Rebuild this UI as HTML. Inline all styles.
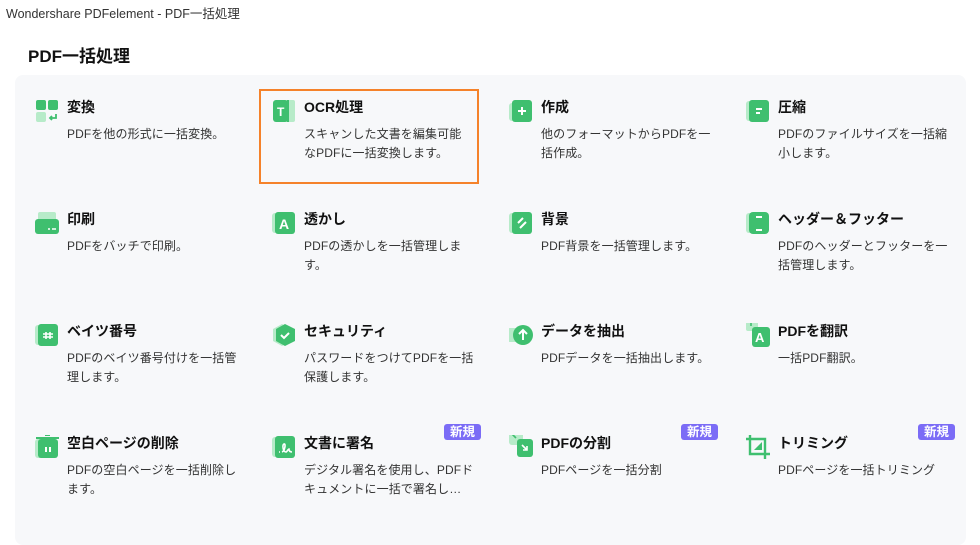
<!DOCTYPE html>
<html><head><meta charset="utf-8"><style>
*{margin:0;padding:0;box-sizing:border-box}
body{width:980px;height:537px;background:#fff;font-family:"Liberation Sans","Noto Sans CJK JP",sans-serif;position:relative;overflow:hidden;color:#222}
.wt{position:absolute;left:6px;top:3px;font-size:12.5px;color:#333}
.h{position:absolute;left:28px;top:42px;font-size:17px;font-weight:bold;color:#111}
.panel{position:absolute;left:15px;top:75px;width:951px;height:470px;background:#f7f8fa;border-radius:8px}
.it{position:absolute;width:230px}
.ic{position:absolute;left:0;top:-2px;width:24px;height:24px}
.t{position:absolute;left:32px;top:-4px;font-size:14px;font-weight:bold;color:#111;white-space:nowrap}
.d{position:absolute;left:32px;top:24px;white-space:nowrap;font-size:12px;line-height:19px;color:#333;letter-spacing:0.1px}
.b{position:absolute;top:-13px;right:21px;background:#7b6cf6;color:#fff;font-size:12.5px;font-weight:bold;padding:0 6px;height:16px;line-height:16px;border-radius:3px}
.sel{position:absolute;left:259px;top:89px;width:220px;height:95px;border:2px solid #f5822a}
</style></head><body>
<div class="wt">Wondershare PDFelement - PDF一括処理</div>
<div class="h">PDF一括処理</div>
<div class="panel"></div>
<div class="sel"></div>

<!-- row1 -->
<div class="it" style="left:35px;top:101px">
<svg class="ic" viewBox="0 0 24 24"><rect x="1" y="1" width="10" height="10" rx="2" fill="#3fbf6f"/><rect x="13" y="1" width="10" height="10" rx="2" fill="#3fbf6f"/><rect x="1" y="13" width="10" height="10" rx="2" fill="#b7ebc9"/><path d="M21 15v4h-6m2-2l-2 2 2 2" stroke="#3fbf6f" stroke-width="1.8" fill="none"/></svg>
<div class="t">変換</div><div class="d">PDFを他の形式に一括変換。</div></div>
<div class="it" style="left:272px;top:101px">
<svg class="ic" viewBox="0 0 24 24"><rect x="10" y="1" width="13" height="22" rx="2" fill="#b7ebc9"/><rect x="1" y="1" width="15" height="22" rx="3" fill="#3fbf6f"/><rect x="15" y="1" width="2" height="22" fill="#3fbf6f"/><text x="5" y="17" font-size="12" font-weight="bold" fill="#fff" font-family="Liberation Sans">T</text></svg>
<div class="t">OCR処理</div><div class="d">スキャンした文書を編集可能<br>なPDFに一括変換します。</div></div>
<div class="it" style="left:509px;top:101px">
<svg class="ic" viewBox="0 0 24 24"><rect x="0" y="4" width="14" height="18" rx="3" fill="#b7ebc9"/><rect x="3" y="1" width="20" height="22" rx="3" fill="#3fbf6f"/><path d="M13 8v8M9 12h8" stroke="#fff" stroke-width="2"/></svg>
<div class="t">作成</div><div class="d">他のフォーマットからPDFを一<br>括作成。</div></div>
<div class="it" style="left:746px;top:101px">
<svg class="ic" viewBox="0 0 24 24"><rect x="0" y="2" width="12" height="20" rx="3" fill="#b7ebc9"/><rect x="3" y="1" width="20" height="22" rx="3" fill="#3fbf6f"/><path d="M10 10h6M10 14h4" stroke="#fff" stroke-width="2"/></svg>
<div class="t">圧縮</div><div class="d">PDFのファイルサイズを一括縮<br>小します。</div></div>

<!-- row2 -->
<div class="it" style="left:35px;top:213px">
<svg class="ic" viewBox="0 0 24 24"><rect x="3" y="1" width="18" height="10" rx="2" fill="#b7ebc9"/><rect x="0" y="8" width="24" height="15" rx="3" fill="#3fbf6f"/><path d="M13 18h2M17 18h4" stroke="#fff" stroke-width="1.6"/></svg>
<div class="t">印刷</div><div class="d">PDFをバッチで印刷。</div></div>
<div class="it" style="left:272px;top:213px">
<svg class="ic" viewBox="0 0 24 24"><rect x="0" y="2" width="12" height="20" rx="3" fill="#b7ebc9"/><rect x="3" y="1" width="20" height="22" rx="3" fill="#3fbf6f"/><text x="7" y="18" font-size="14" font-weight="bold" fill="#fff" font-family="Liberation Sans">A</text></svg>
<div class="t">透かし</div><div class="d">PDFの透かしを一括管理しま<br>す。</div></div>
<div class="it" style="left:509px;top:213px">
<svg class="ic" viewBox="0 0 24 24"><rect x="0" y="2" width="12" height="20" rx="3" fill="#b7ebc9"/><rect x="3" y="1" width="20" height="22" rx="3" fill="#3fbf6f"/><path d="M9 12l5-5M11 17l6-6" stroke="#fff" stroke-width="2"/></svg>
<div class="t">背景</div><div class="d">PDF背景を一括管理します。</div></div>
<div class="it" style="left:746px;top:213px">
<svg class="ic" viewBox="0 0 24 24"><rect x="0" y="2" width="12" height="20" rx="3" fill="#b7ebc9"/><rect x="3" y="1" width="20" height="22" rx="4" fill="#3fbf6f"/><path d="M10 6h6M10 19h6" stroke="#fff" stroke-width="2"/></svg>
<div class="t">ヘッダー＆フッター</div><div class="d">PDFのヘッダーとフッターを一<br>括管理します。</div></div>

<!-- row3 -->
<div class="it" style="left:35px;top:325px">
<svg class="ic" viewBox="0 0 24 24"><rect x="0" y="2" width="12" height="20" rx="3" fill="#b7ebc9"/><rect x="3" y="1" width="20" height="22" rx="3" fill="#3fbf6f"/><path d="M11 9v7M15 9v7M8 11h10M8 14h10" stroke="#fff" stroke-width="1.6"/></svg>
<div class="t">ベイツ番号</div><div class="d">PDFのベイツ番号付けを一括管<br>理します。</div></div>
<div class="it" style="left:272px;top:325px">
<svg class="ic" viewBox="0 0 24 24"><path d="M10 1l9 5v12l-9 5-9-5V6z" fill="#b7ebc9"/><path d="M13 1l10 5v12l-10 5-9-5V6z" fill="#3fbf6f"/><path d="M9 12l3 3 5-5" stroke="#fff" stroke-width="2" fill="none"/></svg>
<div class="t">セキュリティ</div><div class="d">パスワードをつけてPDFを一括<br>保護します。</div></div>
<div class="it" style="left:509px;top:325px">
<svg class="ic" viewBox="0 0 24 24"><rect x="-2" y="5" width="14" height="14" rx="3" fill="#b7ebc9"/><circle cx="14" cy="12" r="10" fill="#3fbf6f"/><path d="M14 17V8M10 11l4-4 4 4" stroke="#fff" stroke-width="2" fill="none"/></svg>
<div class="t">データを抽出</div><div class="d">PDFデータを一括抽出します。</div></div>
<div class="it" style="left:746px;top:325px">
<svg class="ic" viewBox="0 0 24 24"><rect x="0" y="-4" width="12" height="12" rx="2" fill="#b7ebc9"/><rect x="6" y="4" width="18" height="20" rx="3" fill="#3fbf6f"/><path d="M2 -1h6M5 -2v5" stroke="#3fbf6f" stroke-width="1.6"/><text x="9" y="19" font-size="13" font-weight="bold" fill="#fff" font-family="Liberation Sans">A</text></svg>
<div class="t">PDFを翻訳</div><div class="d">一括PDF翻訳。</div></div>

<!-- row4 -->
<div class="it" style="left:35px;top:437px">
<svg class="ic" viewBox="0 0 24 24"><rect x="0" y="4" width="12" height="19" rx="3" fill="#b7ebc9"/><rect x="3" y="4" width="20" height="19" rx="3" fill="#3fbf6f"/><path d="M1 3h23M10 0h5" stroke="#3fbf6f" stroke-width="2"/><path d="M11 12v5M15 12v5" stroke="#fff" stroke-width="2"/></svg>
<div class="t">空白ページの削除</div><div class="d">PDFの空白ページを一括削除し<br>ます。</div></div>
<div class="it" style="left:272px;top:437px">
<svg class="ic" viewBox="0 0 24 24"><rect x="0" y="2" width="12" height="20" rx="3" fill="#b7ebc9"/><rect x="3" y="1" width="20" height="22" rx="3" fill="#3fbf6f"/><path d="M7 17h1M10 17c3-1 4-9 2-8-2 1-1 8 2 8 1 0 2-3 3-3 0 2 1 3 3 3" stroke="#fff" stroke-width="1.6" fill="none"/></svg>
<div class="t">文書に署名</div><div class="d">デジタル署名を使用し、PDFド<br>キュメントに一括で署名し…</div><div class="b">新規</div></div>
<div class="it" style="left:509px;top:437px">
<svg class="ic" viewBox="0 0 24 24"><rect x="0" y="-4" width="14" height="14" rx="3" fill="#b7ebc9"/><rect x="8" y="4" width="16" height="18" rx="3" fill="#3fbf6f"/><path d="M3 -1l4 4" stroke="#3fbf6f" stroke-width="1.6" fill="none"/><path d="M13 10l5 5M18 11v4h-4" stroke="#fff" stroke-width="1.6" fill="none"/></svg>
<div class="t">PDFの分割</div><div class="d">PDFページを一括分割</div><div class="b">新規</div></div>
<div class="it" style="left:746px;top:437px">
<svg class="ic" viewBox="0 0 24 24"><path d="M4 -1v20h20M0 4h19v20" stroke="#3fbf6f" stroke-width="2.4" fill="none"/><path d="M8 15L16 7v8z" fill="#3fbf6f"/></svg>
<div class="t">トリミング</div><div class="d">PDFページを一括トリミング</div><div class="b">新規</div></div>
</body></html>
